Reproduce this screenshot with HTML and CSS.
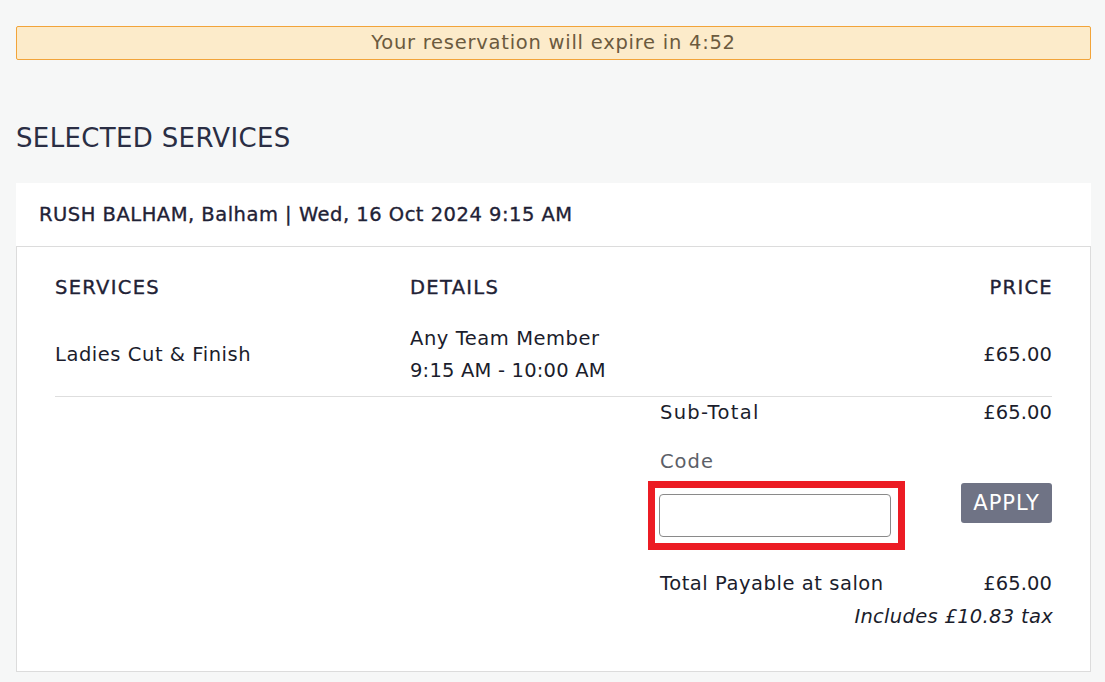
FILE: index.html
```html
<!DOCTYPE html>
<html lang="en">
<head>
<meta charset="utf-8">
<title>Selected services</title>
<link rel="stylesheet" href="styles.css">
</head>
<body>
<div class="page">
  <div class="banner">Your reservation will expire in 4:52</div>

  <h2 class="title">SELECTED SERVICES</h2>

  <div class="card">
    <div class="card-header">RUSH BALHAM, Balham | Wed, 16 Oct 2024 9:15 AM</div>
    <div class="card-body">
      <div class="table">
        <div class="th">SERVICES</div>
        <div class="th">DETAILS</div>
        <div class="th right">PRICE</div>

        <div class="td mid">Ladies Cut &amp; Finish</div>
        <div class="td details">
          <div>Any Team Member</div>
          <div class="time">9:15 AM - 10:00 AM</div>
        </div>
        <div class="td mid right num">£65.00</div>
      </div>

      <div class="summary">
        <div class="sum-row first">
          <span>Sub-Total</span>
          <span class="num">£65.00</span>
        </div>
        <div class="code-label">Code</div>
        <div class="code-row">
          <div class="highlight">
            <input class="code-input" type="text" aria-label="Code">
          </div>
          <button class="apply">APPLY</button>
        </div>
        <div class="sum-row total">
          <span>Total Payable at salon</span>
          <span class="num">£65.00</span>
        </div>
        <div class="tax">Includes £10.83 tax</div>
      </div>
    </div>
  </div>
</div>
</body>
</html>
```

FILE: styles.css
```css
* { box-sizing: border-box; }

html, body {
  margin: 0;
  padding: 0;
  background: #f6f7f7;
}

body {
  font-family: "DejaVu Sans", "Noto Sans", sans-serif;
  color: #1b1d2c;
  font-size: 19.5px;
  letter-spacing: 0.55px;
}

.page {
  padding: 26px 14px 0 16px;
}

.banner {
  height: 34px;
  line-height: 32px;
  text-align: center;
  background: #fcebca;
  border: 1px solid #f2a43a;
  border-radius: 2px;
  color: #6b5a3e;
  font-size: 19.5px;
  letter-spacing: 0.75px;
}

.title {
  margin: 0;
  padding-top: 64px;
  height: 123px;
  font-size: 26px;
  font-weight: normal;
  line-height: 28px;
  color: #2a2e44;
  letter-spacing: 0.35px;
}

.card {
  background: #fff;
}

.card-header {
  height: 63px;
  line-height: 63px;
  padding-left: 23px;
  font-size: 19.5px;
  letter-spacing: 0.5px;
  color: #1f2236;
  -webkit-text-stroke: 0.35px #1f2236;
}

.card-body {
  border: 1px solid #dcdcdc;
  padding: 29px 38px 42px 38px;
}

.table {
  display: grid;
  grid-template-columns: 355px 1fr auto;
  border-bottom: 1px solid #dedede;
  padding-bottom: 9px;
}

.th {
  line-height: 24px;
  font-size: 19.5px;
  letter-spacing: 1.3px;
  color: #1f2236;
  -webkit-text-stroke: 0.35px #1f2236;
  margin-bottom: 23px;
}

.th.right {
  margin-right: -1px;
}

.td {
  line-height: 32px;
}

.time {
  letter-spacing: 0.2px;
}

.num {
  letter-spacing: 0.1px;
}

.mid {
  align-self: center;
}

.right {
  text-align: right;
}

.summary {
  margin-left: 605px;
  padding-top: 4px;
}

.sum-row {
  display: flex;
  justify-content: space-between;
  line-height: 24px;
}

.first span:first-child {
  letter-spacing: 1.3px;
}

.code-label {
  margin-top: 25px;
  line-height: 24px;
  color: #5c5f68;
  letter-spacing: 1px;
}

.code-row {
  display: flex;
  justify-content: space-between;
  align-items: flex-start;
  margin-top: 7px;
  margin-left: -12px;
}

.highlight {
  border: 7px solid #ec1c24;
  padding: 6px 7px 6px 4px;
}

.code-input {
  display: block;
  width: 232px;
  height: 43px;
  border: 1px solid #8a8a8a;
  border-radius: 4px;
  background: #fff;
  font: inherit;
  padding: 0 8px;
}

.apply {
  margin-top: 2px;
  width: 91px;
  height: 40px;
  border: none;
  border-radius: 3px;
  background: #6f7385;
  color: #fff;
  font-family: inherit;
  font-size: 21px;
  letter-spacing: 1px;
  padding: 0;
}

.total {
  margin-top: 22px;
}

.tax {
  margin-top: 9px;
  line-height: 24px;
  text-align: right;
  font-style: italic;
  letter-spacing: 0.3px;
  margin-right: -1px;
}
```
